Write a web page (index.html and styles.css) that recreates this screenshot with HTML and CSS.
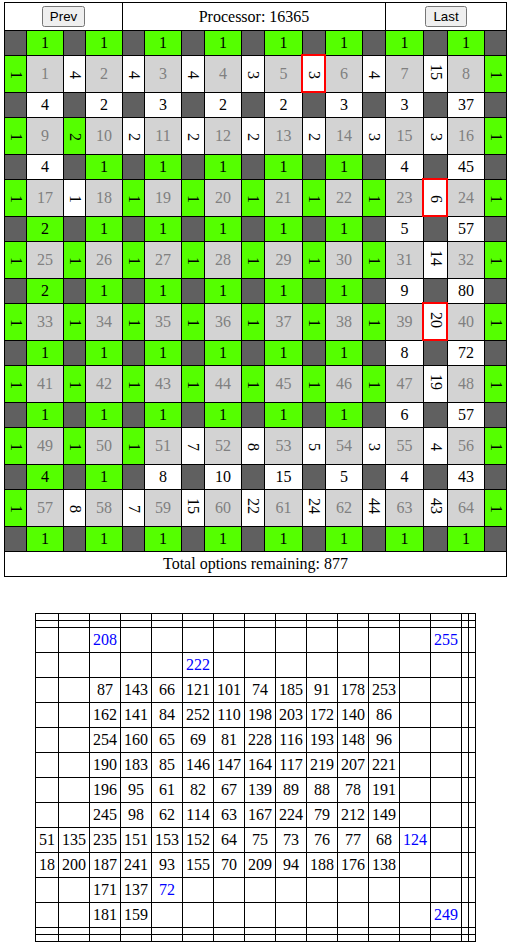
FILE: index.html
```html
<!DOCTYPE html>
<html>
<head>
    <title>Processor Puzzle</title>
    <link rel="stylesheet" href="styles.css">
</head>
<body>
    <table class="board">
        <colgroup>
            <col class="c22"><col class="c37"><col class="c22"><col class="c37">
            <col class="c22"><col class="c37"><col class="c23"><col class="c37">
            <col class="c23"><col class="c38"><col class="c23"><col class="c37">
            <col class="c23"><col class="c38"><col class="c24"><col class="c37"><col class="c22">
        </colgroup>
        <tr class="head">
            <td colspan="4"><button>Prev</button></td>
            <td colspan="9">Processor: 16365</td>
            <td colspan="4"><button>Last</button></td>
        </tr>
        <tr class="thin">
            <td class="dark"></td><td class="green">1</td><td class="dark"></td><td class="green">1</td><td class="dark"></td><td class="green">1</td><td class="dark"></td><td class="green">1</td><td class="dark"></td><td class="green">1</td><td class="dark"></td><td class="green">1</td><td class="dark"></td><td class="green">1</td><td class="dark"></td><td class="green">1</td><td class="dark"></td>
        </tr>
        <tr class="wide">
            <td class="green"><span class="side">1</span></td><td class="num">1</td><td><span class="side">4</span></td><td class="num">2</td><td><span class="side">4</span></td><td class="num">3</td><td><span class="side">4</span></td><td class="num">4</td><td><span class="side">3</span></td><td class="num">5</td><td class="pick"><span class="side">3</span></td><td class="num">6</td><td><span class="side">4</span></td><td class="num">7</td><td><span class="side">15</span></td><td class="num">8</td><td class="green"><span class="side">1</span></td>
        </tr>
        <tr class="thin">
            <td class="dark"></td><td>4</td><td class="dark"></td><td>2</td><td class="dark"></td><td>3</td><td class="dark"></td><td>2</td><td class="dark"></td><td>2</td><td class="dark"></td><td>3</td><td class="dark"></td><td>3</td><td class="dark"></td><td>37</td><td class="dark"></td>
        </tr>
        <tr class="wide">
            <td class="green"><span class="side">1</span></td><td class="num">9</td><td class="green"><span class="side">2</span></td><td class="num">10</td><td><span class="side">2</span></td><td class="num">11</td><td><span class="side">2</span></td><td class="num">12</td><td><span class="side">2</span></td><td class="num">13</td><td><span class="side">2</span></td><td class="num">14</td><td><span class="side">3</span></td><td class="num">15</td><td><span class="side">3</span></td><td class="num">16</td><td class="green"><span class="side">1</span></td>
        </tr>
        <tr class="thin">
            <td class="dark"></td><td>4</td><td class="dark"></td><td class="green">1</td><td class="dark"></td><td class="green">1</td><td class="dark"></td><td class="green">1</td><td class="dark"></td><td class="green">1</td><td class="dark"></td><td class="green">1</td><td class="dark"></td><td>4</td><td class="dark"></td><td>45</td><td class="dark"></td>
        </tr>
        <tr class="wide">
            <td class="green"><span class="side">1</span></td><td class="num">17</td><td><span class="side">1</span></td><td class="num">18</td><td class="green"><span class="side">1</span></td><td class="num">19</td><td class="green"><span class="side">1</span></td><td class="num">20</td><td class="green"><span class="side">1</span></td><td class="num">21</td><td class="green"><span class="side">1</span></td><td class="num">22</td><td class="green"><span class="side">1</span></td><td class="num">23</td><td class="pick"><span class="side">6</span></td><td class="num">24</td><td class="green"><span class="side">1</span></td>
        </tr>
        <tr class="thin">
            <td class="dark"></td><td class="green">2</td><td class="dark"></td><td class="green">1</td><td class="dark"></td><td class="green">1</td><td class="dark"></td><td class="green">1</td><td class="dark"></td><td class="green">1</td><td class="dark"></td><td class="green">1</td><td class="dark"></td><td>5</td><td class="dark"></td><td>57</td><td class="dark"></td>
        </tr>
        <tr class="wide">
            <td class="green"><span class="side">1</span></td><td class="num">25</td><td class="green"><span class="side">1</span></td><td class="num">26</td><td class="green"><span class="side">1</span></td><td class="num">27</td><td class="green"><span class="side">1</span></td><td class="num">28</td><td class="green"><span class="side">1</span></td><td class="num">29</td><td class="green"><span class="side">1</span></td><td class="num">30</td><td class="green"><span class="side">1</span></td><td class="num">31</td><td><span class="side">14</span></td><td class="num">32</td><td class="green"><span class="side">1</span></td>
        </tr>
        <tr class="thin">
            <td class="dark"></td><td class="green">2</td><td class="dark"></td><td class="green">1</td><td class="dark"></td><td class="green">1</td><td class="dark"></td><td class="green">1</td><td class="dark"></td><td class="green">1</td><td class="dark"></td><td class="green">1</td><td class="dark"></td><td>9</td><td class="dark"></td><td>80</td><td class="dark"></td>
        </tr>
        <tr class="wide">
            <td class="green"><span class="side">1</span></td><td class="num">33</td><td class="green"><span class="side">1</span></td><td class="num">34</td><td class="green"><span class="side">1</span></td><td class="num">35</td><td class="green"><span class="side">1</span></td><td class="num">36</td><td class="green"><span class="side">1</span></td><td class="num">37</td><td class="green"><span class="side">1</span></td><td class="num">38</td><td class="green"><span class="side">1</span></td><td class="num">39</td><td class="pick"><span class="side">20</span></td><td class="num">40</td><td class="green"><span class="side">1</span></td>
        </tr>
        <tr class="thin">
            <td class="dark"></td><td class="green">1</td><td class="dark"></td><td class="green">1</td><td class="dark"></td><td class="green">1</td><td class="dark"></td><td class="green">1</td><td class="dark"></td><td class="green">1</td><td class="dark"></td><td class="green">1</td><td class="dark"></td><td>8</td><td class="dark"></td><td>72</td><td class="dark"></td>
        </tr>
        <tr class="wide">
            <td class="green"><span class="side">1</span></td><td class="num">41</td><td class="green"><span class="side">1</span></td><td class="num">42</td><td class="green"><span class="side">1</span></td><td class="num">43</td><td class="green"><span class="side">1</span></td><td class="num">44</td><td class="green"><span class="side">1</span></td><td class="num">45</td><td class="green"><span class="side">1</span></td><td class="num">46</td><td class="green"><span class="side">1</span></td><td class="num">47</td><td><span class="side">19</span></td><td class="num">48</td><td class="green"><span class="side">1</span></td>
        </tr>
        <tr class="thin">
            <td class="dark"></td><td class="green">1</td><td class="dark"></td><td class="green">1</td><td class="dark"></td><td class="green">1</td><td class="dark"></td><td class="green">1</td><td class="dark"></td><td class="green">1</td><td class="dark"></td><td class="green">1</td><td class="dark"></td><td>6</td><td class="dark"></td><td>57</td><td class="dark"></td>
        </tr>
        <tr class="wide">
            <td class="green"><span class="side">1</span></td><td class="num">49</td><td class="green"><span class="side">1</span></td><td class="num">50</td><td class="green"><span class="side">1</span></td><td class="num">51</td><td><span class="side">7</span></td><td class="num">52</td><td><span class="side">8</span></td><td class="num">53</td><td><span class="side">5</span></td><td class="num">54</td><td><span class="side">3</span></td><td class="num">55</td><td><span class="side">4</span></td><td class="num">56</td><td class="green"><span class="side">1</span></td>
        </tr>
        <tr class="thin">
            <td class="dark"></td><td class="green">4</td><td class="dark"></td><td class="green">1</td><td class="dark"></td><td>8</td><td class="dark"></td><td>10</td><td class="dark"></td><td>15</td><td class="dark"></td><td>5</td><td class="dark"></td><td>4</td><td class="dark"></td><td>43</td><td class="dark"></td>
        </tr>
        <tr class="wide">
            <td class="green"><span class="side">1</span></td><td class="num">57</td><td><span class="side">8</span></td><td class="num">58</td><td><span class="side">7</span></td><td class="num">59</td><td><span class="side">15</span></td><td class="num">60</td><td><span class="side">22</span></td><td class="num">61</td><td><span class="side">24</span></td><td class="num">62</td><td><span class="side">44</span></td><td class="num">63</td><td><span class="side">43</span></td><td class="num">64</td><td class="green"><span class="side">1</span></td>
        </tr>
        <tr class="thin">
            <td class="dark"></td><td class="green">1</td><td class="dark"></td><td class="green">1</td><td class="dark"></td><td class="green">1</td><td class="dark"></td><td class="green">1</td><td class="dark"></td><td class="green">1</td><td class="dark"></td><td class="green">1</td><td class="dark"></td><td class="green">1</td><td class="dark"></td><td class="green">1</td><td class="dark"></td>
        </tr>
        <tr class="foot">
            <td colspan="17">Total options remaining: 877</td>
        </tr>
    </table>

    <table class="values">
        <tr><td></td><td></td><td></td><td></td><td></td><td></td><td></td><td></td><td></td><td></td><td></td><td></td><td></td><td></td><td></td><td></td></tr>
        <tr><td></td><td></td><td></td><td></td><td></td><td></td><td></td><td></td><td></td><td></td><td></td><td></td><td></td><td></td><td></td><td></td></tr>
        <tr><td></td><td></td><td class="given">208</td><td></td><td></td><td></td><td></td><td></td><td></td><td></td><td></td><td></td><td></td><td class="given">255</td><td></td><td></td></tr>
        <tr><td></td><td></td><td></td><td></td><td></td><td class="given">222</td><td></td><td></td><td></td><td></td><td></td><td></td><td></td><td></td><td></td><td></td></tr>
        <tr><td></td><td></td><td>87</td><td>143</td><td>66</td><td>121</td><td>101</td><td>74</td><td>185</td><td>91</td><td>178</td><td>253</td><td></td><td></td><td></td><td></td></tr>
        <tr><td></td><td></td><td>162</td><td>141</td><td>84</td><td>252</td><td>110</td><td>198</td><td>203</td><td>172</td><td>140</td><td>86</td><td></td><td></td><td></td><td></td></tr>
        <tr><td></td><td></td><td>254</td><td>160</td><td>65</td><td>69</td><td>81</td><td>228</td><td>116</td><td>193</td><td>148</td><td>96</td><td></td><td></td><td></td><td></td></tr>
        <tr><td></td><td></td><td>190</td><td>183</td><td>85</td><td>146</td><td>147</td><td>164</td><td>117</td><td>219</td><td>207</td><td>221</td><td></td><td></td><td></td><td></td></tr>
        <tr><td></td><td></td><td>196</td><td>95</td><td>61</td><td>82</td><td>67</td><td>139</td><td>89</td><td>88</td><td>78</td><td>191</td><td></td><td></td><td></td><td></td></tr>
        <tr><td></td><td></td><td>245</td><td>98</td><td>62</td><td>114</td><td>63</td><td>167</td><td>224</td><td>79</td><td>212</td><td>149</td><td></td><td></td><td></td><td></td></tr>
        <tr><td>51</td><td>135</td><td>235</td><td>151</td><td>153</td><td>152</td><td>64</td><td>75</td><td>73</td><td>76</td><td>77</td><td>68</td><td class="given">124</td><td></td><td></td><td></td></tr>
        <tr><td>18</td><td>200</td><td>187</td><td>241</td><td>93</td><td>155</td><td>70</td><td>209</td><td>94</td><td>188</td><td>176</td><td>138</td><td></td><td></td><td></td><td></td></tr>
        <tr><td></td><td></td><td>171</td><td>137</td><td class="given">72</td><td></td><td></td><td></td><td></td><td></td><td></td><td></td><td></td><td></td><td></td><td></td></tr>
        <tr><td></td><td></td><td>181</td><td>159</td><td></td><td></td><td></td><td></td><td></td><td></td><td></td><td></td><td></td><td class="given">249</td><td></td><td></td></tr>
        <tr><td></td><td></td><td></td><td></td><td></td><td></td><td></td><td></td><td></td><td></td><td></td><td></td><td></td><td></td><td></td><td></td></tr>
        <tr><td></td><td></td><td></td><td></td><td></td><td></td><td></td><td></td><td></td><td></td><td></td><td></td><td></td><td></td><td></td><td></td></tr>
    </table>
</body>
</html>
```

FILE: styles.css
```css
body {
    font-family: "Liberation Serif", serif;
    font-size: 16px;
    margin: 2px 3px 0 4px;
    color: #000;
    background-color: #fff;
}
table {
    border-collapse: collapse;
}
td {
    border: 1px solid #000;
    padding: 3px 0;
    text-align: center;
}
button {
    font-family: "Liberation Sans", sans-serif;
    font-size: 13.3333px;
}

.board {
    table-layout: fixed;
    width: 503px;
    border-right: 1px solid #000;
}
.c22 { width: 22px; }
.c23 { width: 23px; }
.c24 { width: 24px; }
.c37 { width: 37px; }
.c38 { width: 38px; }
.wide td { height: 30px; }
.dark { background-color: #606060; }
.green { background-color: #5f0; }
.num {
    background-color: #d3d3d3;
    color: #808080;
}
.pick { position: relative; }
.pick::after {
    content: "";
    position: absolute;
    top: -2px;
    left: -2px;
    right: -1px;
    bottom: -1px;
    border: 2px solid #f00;
}
.side {
    display: inline-block;
    writing-mode: vertical-rl;
}

.values {
    margin: 36px auto 0;
}
.values td { padding: 3px; }
.given { color: #00f; }
```
